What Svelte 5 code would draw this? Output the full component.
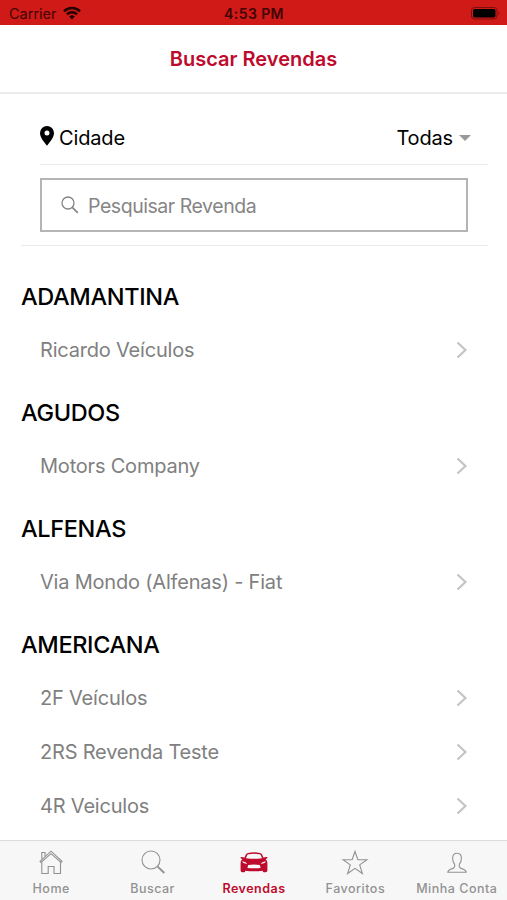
<script lang="ts">
type City = {
  name: string;
  dealers: string[];
};

const cities: City[] = [
  { name: "ADAMANTINA", dealers: ["Ricardo Veículos"] },
  { name: "AGUDOS", dealers: ["Motors Company"] },
  { name: "ALFENAS", dealers: ["Via Mondo (Alfenas) - Fiat"] },
  {
    name: "AMERICANA",
    dealers: ["2F Veículos", "2RS Revenda Teste", "4R Veiculos"],
  },
];

const tabs = [
  { id: "home", label: "Home" },
  { id: "search", label: "Buscar" },
  { id: "dealers", label: "Revendas" },
  { id: "favorites", label: "Favoritos" },
  { id: "account", label: "Minha Conta" },
];

let activeTab = $state("dealers");
let query = $state("");
</script>

<div class="screen">
  <div class="status">
    <div class="status__carrier">
      <span>Carrier</span>
      <svg width="18" height="14" viewBox="0 0 18 14">
        <g fill="none" stroke="currentColor" stroke-width="2.6">
          <path d="M1 5.3C5.4 .9 12.6 .9 17 5.3" />
          <path d="M4 8.3C6.8 5.5 11.2 5.5 14 8.3" />
        </g>
        <path d="M6.2 10.5Q9 8.2 11.8 10.5L9 13.4Z" fill="currentColor" />
      </svg>
    </div>
    <div class="status__time">4:53 PM</div>
    <div class="status__battery">
      <svg width="30" height="13" viewBox="0 0 30 13">
        <rect x=".5" y=".5" width="25.5" height="11.5" rx="3" fill="none" stroke="#7e0d0d" />
        <rect x="2" y="2" width="22.5" height="8.5" rx="1.8" fill="#000" />
        <path d="M27.5 4.5Q29.5 6.2 27.5 8Z" fill="#7e0d0d" />
      </svg>
    </div>
  </div>

  <header class="header">
    <h1>Buscar Revendas</h1>
  </header>

  <main class="content">
    <div class="filters">
      <div class="city">
        <svg width="14" height="20" viewBox="0 0 14 20">
          <path
            fill="#000"
            fill-rule="evenodd"
            d="M7 0a7 7 0 0 0-7 7c0 4.700 4.600 9.500 7 12.700 2.400-3.200 7-8 7-12.700a7 7 0 0 0-7-7zm0 4.400a2.500 2.500 0 1 1 0 5 2.500 2.500 0 0 1 0-5z"
          />
        </svg>
        <span class="city__label">Cidade</span>
        <span class="city__value">Todas</span>
        <svg width="12" height="6" viewBox="0 0 12 6">
          <path d="M0 0h12L6 6z" fill="#999" />
        </svg>
      </div>
      <label class="search">
        <svg width="18" height="18" viewBox="0 0 18 18" fill="none" stroke="#858585" stroke-width="1.3">
          <circle cx="7" cy="7" r="6" />
          <path d="M11.300 11.300L16.800 16.800" stroke-width="1.700" />
        </svg>
        <input placeholder="Pesquisar Revenda" bind:value={query} />
      </label>
    </div>

    {#each cities as city}
      <section>
        <h2>{city.name}</h2>
        {#each city.dealers as dealer}
          <div class="dealer">
            <span>{dealer}</span>
            <svg width="12" height="18" viewBox="0 0 12 18">
              <path d="M1.500 1.500L9.500 9L1.500 16.500" fill="none" stroke="#c4c4c4" stroke-width="2.200" />
            </svg>
          </div>
        {/each}
      </section>
    {/each}
  </main>

  <nav class="tabs">
    {#each tabs as tab}
      <button class="tab" class:active={activeTab === tab.id} onclick={() => (activeTab = tab.id)}>
        <svg width="28" height="26" viewBox="0 0 28 26" fill="none" stroke="currentColor" stroke-width="1.100">
          {#if tab.id === "home"}
            <path d="M3 12.300L14 2.200L25 12.300L24 13.400L14 4.700L4 13.400Z" />
            <path d="M4.800 13V24.500H11.200V17.500H17V24.500H23.500V13M4.800 10.300V3.500H8V7.300" />
          {:else if tab.id === "search"}
            <circle cx="12" cy="11" r="9" />
            <path d="M18.400 17.400L25.300 24" stroke-width="1.900" />
          {:else if tab.id === "dealers"}
            <path
              fill="currentColor"
              stroke="none"
              fill-rule="evenodd"
              d="M4.600 8.500C5.600 5.500 6.300 4.300 8 3.900Q14 2.700 20 3.900C21.700 4.300 22.400 5.500 23.400 8.500L26.600 8C28 8.100 27.800 9.400 26.500 9.700L25.400 10C27.200 11.300 27.500 12.600 27.400 16V21.500Q27.400 23.300 25.600 23.300H24Q22.800 23.300 22.700 21.700Q14 22.800 5.300 21.700Q5.200 23.300 4 23.300H2.400Q.6 23.300 .6 21.500V16C.5 12.600 .8 11.300 2.600 10L1.500 9.700C.2 9.400 0 8.100 1.400 8ZM6 9.200Q14 10.200 22 9.200C21.100 6.200 20.600 5.400 19.500 5.200Q14 4.300 8.500 5.200C7.400 5.400 6.900 6.200 6 9.200ZM2.200 12.300Q2.500 14.500 7 15Q6.300 13 2.200 12.300ZM25.800 12.300Q25.500 14.500 21 15Q21.700 13 25.800 12.300ZM8.200 16Q14 15.200 19.800 16L20.600 19Q14 19.600 7.400 19Z"
            />
          {:else if tab.id === "favorites"}
            <path d="M14 2.500L16.900 10.700H25.900L18.700 15.900L21.400 24.500L14 19.300L6.600 24.500L9.300 15.900L2.100 10.700H11.100Z" />
          {:else}
            <path
              d="M14 4.200C10.700 4.200 9.600 6.300 9.600 9.300C9.600 12 10.300 13.700 11.600 15.200C12.200 17.800 12 18.900 9.500 19.600C6.500 20.400 5 21.300 4.800 23.200H23.200C23 21.300 21.500 20.400 18.500 19.600C16 18.900 15.800 17.800 16.400 15.200C17.700 13.700 18.400 12 18.400 9.300C18.400 6.300 17.300 4.200 14 4.200Z"
            />
          {/if}
        </svg>
        <span>{tab.label}</span>
      </button>
    {/each}
  </nav>
</div>

<style>
  :global(body) {
    margin: 0;
    background: #fff;
  }

  .screen {
    display: flex;
    flex-direction: column;
    width: 507px;
    height: 900px;
    overflow: hidden;
    background: #fff;
    font-family: Inter, "Liberation Sans", sans-serif;
  }

  svg {
    display: block;
    flex: none;
  }

  h1,
  h2 {
    margin: 0;
  }

  .status {
    display: grid;
    grid-template-columns: 1fr auto 1fr;
    align-items: center;
    box-sizing: border-box;
    height: 25px;
    flex: none;
    padding: 2px 6px 0 9px;
    background: #d01a17;
    color: #420505;
    font-size: 14.5px;
  }

  .status__carrier {
    display: flex;
    align-items: center;
    gap: 6px;
  }

  .status__carrier svg {
    color: #240202;
    margin-top: -2px;
  }

  .status__time {
    margin-right: 2px;
    font-weight: 600;
    font-size: 14px;
    letter-spacing: 0.4px;
  }

  .status__battery {
    justify-self: end;
    margin-top: -1px;
  }

  .header {
    display: flex;
    align-items: center;
    justify-content: center;
    box-sizing: border-box;
    height: 69px;
    flex: none;
    border-bottom: 2px solid #ececec;
  }

  h1 {
    color: #be0a2c;
    font-size: 20px;
    font-weight: 600;
  }

  .content {
    flex: 1;
    min-height: 0;
    overflow: hidden;
  }

  .filters {
    box-sizing: border-box;
    height: 152px;
    margin: 0 19px 15px 21px;
    padding: 17px 0 0 19px;
    border-bottom: 1px solid #ebebeb;
  }

  .city {
    display: flex;
    align-items: center;
    box-sizing: border-box;
    height: 54px;
    padding-right: 17px;
    border-bottom: 1px solid #ebebeb;
    font-size: 20px;
    letter-spacing: -0.15px;
  }

  .city > svg:first-child {
    margin: -4px 5px 0 0;
  }

  .city__label {
    flex: 1;
  }

  .city__value {
    margin-right: 6px;
  }

  .search {
    display: flex;
    align-items: center;
    box-sizing: border-box;
    height: 54px;
    margin: 13px 20px 0 0;
    padding-left: 19px;
    border: 2px solid #b4b4b4;
  }

  .search input {
    width: 300px;
    margin: 2px 0 0 9px;
    padding: 0;
    border: 0;
    outline: 0;
    background: none;
    font: inherit;
    font-size: 19.5px;
    letter-spacing: -0.45px;
  }

  .search input::placeholder {
    color: #858585;
    opacity: 1;
  }

  h2 {
    box-sizing: border-box;
    height: 62px;
    padding: 21px 21px 0;
    font-size: 23.5px;
    font-weight: 500;
    letter-spacing: -0.35px;
    line-height: 30px;
  }

  .dealer {
    display: flex;
    align-items: center;
    justify-content: space-between;
    height: 54px;
    padding: 0 39px 0 40px;
    color: #808080;
    font-size: 20px;
    letter-spacing: -0.2px;
  }

  .tabs {
    display: grid;
    grid-template-columns: repeat(5, 1fr);
    box-sizing: border-box;
    height: 60px;
    flex: none;
    border-top: 1px solid #dcdcdc;
    background: #f7f7f7;
  }

  .tab {
    display: flex;
    flex-direction: column;
    align-items: center;
    padding: 8px 0 0 1px;
    border: 0;
    background: none;
    color: #929292;
    font: inherit;
    font-size: 12.5px;
    font-weight: 500;
    line-height: 16px;
    white-space: nowrap;
  }

  .tab span {
    margin-top: 6px;
    letter-spacing: 0.5px;
  }

  .active {
    color: #be0a2c;
    font-weight: 600;
  }
</style>
